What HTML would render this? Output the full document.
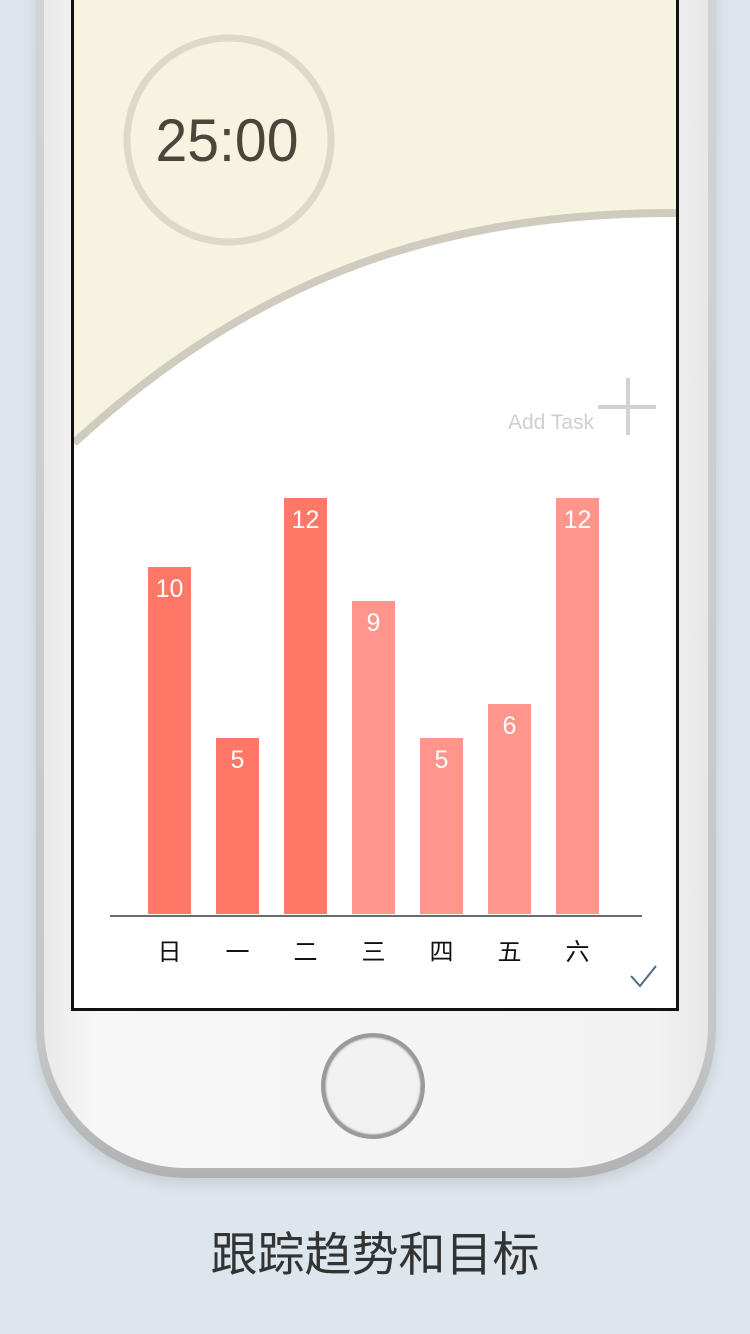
<!DOCTYPE html>
<html><head><meta charset="utf-8"><style>
html,body{margin:0;padding:0}
body{width:750px;height:1334px;background:#dde6ec;position:relative;overflow:hidden;font-family:"Liberation Sans","Noto Sans CJK SC",sans-serif}
.frame{position:absolute;left:36px;top:-220px;width:680px;height:1398px;border-radius:150px;background:linear-gradient(180deg,#d4d6d8,#c4c6c8 90%,#b0b2b4);box-shadow:0 6px 14px rgba(0,0,0,0.10)}
.body{position:absolute;left:44px;top:-220px;width:664px;height:1388px;border-radius:142px;background:linear-gradient(90deg,#e9e9e9,#f7f7f7 8%,#f2f2f2 92%,#e7e7e7)}
.screen{position:absolute;left:71px;top:-5px;width:602px;height:1010px;border:3px solid #111;background:#fff;overflow:hidden}
.home{position:absolute;left:321px;top:1033px;width:104px;height:106px;border-radius:50%;border:4px solid #9a9a9a;box-sizing:border-box;background:#f1f1f1;box-shadow:inset 0 0 2px #555}
.bar{position:absolute;width:43px;bottom:420px;color:#fff;font-size:25px;text-align:center;padding-top:8px;box-sizing:border-box}
.lab{position:absolute;top:932px;width:43px;text-align:center;font-size:24px;color:#111}
</style></head><body>
<div class="frame"></div>
<div class="body"></div>
<div class="home"></div>
<div class="screen">
<svg width="602" height="1010" style="position:absolute;left:0;top:0">
<path d="M0 0 H602 V215 C400 215 200 260 0 445 Z" fill="#f6f3e0"/>
<path d="M0 445 C200 260 400 215 602 215" fill="none" stroke="#cfcbbf" stroke-width="8"/>
<circle cx="155" cy="142" r="102" fill="none" stroke="#dcd9c8" stroke-width="7"/>
<text x="153" y="163" font-size="60" fill="#4a463c" text-anchor="middle" font-family="Liberation Sans,sans-serif" textLength="143" lengthAdjust="spacingAndGlyphs">25:00</text>
<text x="520" y="431" font-size="21" fill="#cfcfcf" text-anchor="end" font-family="Liberation Sans,sans-serif">Add Task</text>
<path d="M554 380 V437 M524 409 H582" stroke="#d2d2d2" stroke-width="4"/>
<line x1="36" y1="918" x2="568" y2="918" stroke="#6a6a6a" stroke-width="2"/>
<path d="M557 978 L566 988 L582 968" fill="none" stroke="#4f6b7c" stroke-width="2"/>
</svg>
</div>
<div class="bar" style="left:148px;top:567px;height:347px;background:#ff7867">10</div>
<div class="bar" style="left:216px;top:738px;height:176px;background:#ff7867">5</div>
<div class="bar" style="left:284px;top:498px;height:416px;background:#ff7867">12</div>
<div class="bar" style="left:352px;top:601px;height:313px;background:#ff958b">9</div>
<div class="bar" style="left:420px;top:738px;height:176px;background:#ff958b">5</div>
<div class="bar" style="left:488px;top:704px;height:210px;background:#ff958b">6</div>
<div class="bar" style="left:556px;top:498px;height:416px;background:#ff958b">12</div>
<div class="lab" style="left:148px">日</div>
<div class="lab" style="left:216px">一</div>
<div class="lab" style="left:284px">二</div>
<div class="lab" style="left:352px">三</div>
<div class="lab" style="left:420px">四</div>
<div class="lab" style="left:488px">五</div>
<div class="lab" style="left:556px">六</div>
<div style="position:absolute;left:0;width:750px;top:1216px;text-align:center;font-size:47px;color:#333">跟踪趋势和目标</div>
</body></html>
